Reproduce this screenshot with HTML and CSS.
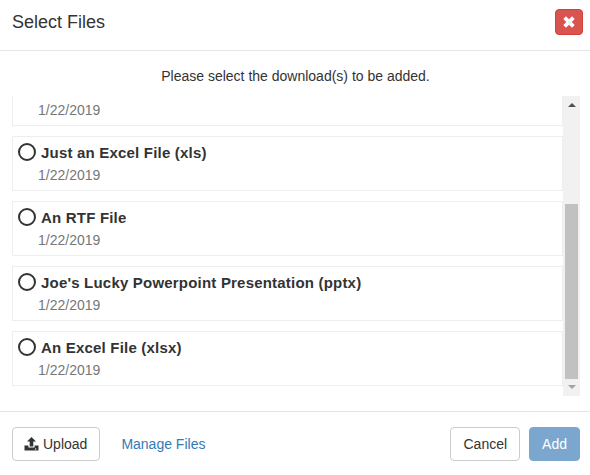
FILE: index.html
```html
<!DOCTYPE html>
<html>
<head>
  <title>Select Files</title>
  <link rel="stylesheet" href="styles.css">
</head>
<body>
  <div class="modal">
    <div class="modal-header">
      <h4>Select Files</h4>
      <button class="close-button">
        <svg width="12" height="12" viewBox="0 0 12 12"><path d="M3 0.3 L6 3.3 L9 0.3 L11.7 3 L8.7 6 L11.7 9 L9 11.7 L6 8.7 L3 11.7 L0.3 9 L3.3 6 L0.3 3 Z" fill="#fff"/></svg>
      </button>
    </div>
    <div class="modal-body">
      <p class="hint">Please select the download(s) to be added.</p>
      <div class="list-wrap">
        <div class="file-list">
          <div class="file-item file-cut">
            <div class="file-date">1/22/2019</div>
          </div>
          <div class="file-item">
            <div class="file-name"><span class="radio"></span>Just an Excel File (xls)</div>
            <div class="file-date">1/22/2019</div>
          </div>
          <div class="file-item">
            <div class="file-name"><span class="radio"></span>An RTF File</div>
            <div class="file-date">1/22/2019</div>
          </div>
          <div class="file-item">
            <div class="file-name"><span class="radio"></span>Joe's Lucky Powerpoint Presentation (pptx)</div>
            <div class="file-date">1/22/2019</div>
          </div>
          <div class="file-item">
            <div class="file-name"><span class="radio"></span>An Excel File (xlsx)</div>
            <div class="file-date">1/22/2019</div>
          </div>
        </div>
        <div class="scrollbar">
          <span class="arrow-up"></span>
          <div class="track"><div class="thumb"></div></div>
          <span class="arrow-down"></span>
        </div>
      </div>
    </div>
    <div class="modal-footer">
      <button class="btn">
        <svg class="upload-icon" width="15" height="14" viewBox="0 0 15 14"><path d="M7.5 0 L12 4.6 L9.3 4.6 L9.3 9.6 L5.7 9.6 L5.7 4.6 L3 4.6 Z" fill="#333"/><path d="M0.5 8.4 L4.4 8.4 L4.4 10.6 L10.6 10.6 L10.6 8.4 L14.5 8.4 L14.5 13.6 L0.5 13.6 Z" fill="#333"/><rect x="11" y="11.4" width="1.2" height="1.2" fill="#fff"/></svg>Upload
      </button>
      <a class="manage-link" href="#">Manage Files</a>
      <div class="spacer"></div>
      <button class="btn">Cancel</button>
      <button class="btn btn-add">Add</button>
    </div>
  </div>
</body>
</html>
```

FILE: styles.css
```css
* {
  box-sizing: border-box;
}
body {
  margin: 0;
  background: #fff;
  font-family: "Liberation Sans", Arial, sans-serif;
  font-size: 14px;
  color: #333;
}
.modal {
  width: 590px;
  height: 475px;
}
.modal-header {
  height: 51px;
  display: flex;
  align-items: flex-start;
  justify-content: space-between;
  padding: 9px 7px 0 12px;
  border-bottom: 1px solid #e5e5e5;
}
.modal-header h4 {
  margin: 3px 0 0 0;
  font-size: 18px;
  line-height: 20px;
  font-weight: normal;
}
.close-button {
  width: 28px;
  height: 26px;
  padding: 0;
  display: flex;
  align-items: center;
  justify-content: center;
  background: #d9534f;
  border: 1px solid #d43f3a;
  border-radius: 4px;
}
.modal-body {
  height: 360px;
  padding: 0 10px 0 12px;
}
.hint {
  margin: 0;
  height: 45px;
  padding: 17px 1px 0 0;
  line-height: 16px;
  text-align: center;
}
.list-wrap {
  display: flex;
  height: 300px;
}
.file-list {
  width: 551px;
  overflow: hidden;
}
.file-item {
  height: 55px;
  margin-bottom: 10px;
  padding: 4px 0 0 5px;
  border: 1px solid #eee;
}
.file-cut {
  height: 30px;
  padding-top: 2px;
  border-top: none;
}
.file-name {
  display: flex;
  align-items: center;
  height: 22px;
  font-size: 15px;
  font-weight: bold;
  letter-spacing: 0.2px;
}
.radio {
  width: 18px;
  height: 18px;
  margin-right: 5px;
  border: 2px solid #333;
  border-radius: 50%;
}
.file-date {
  padding-left: 20px;
  margin-top: 4px;
  line-height: 16px;
  color: #777;
}
.scrollbar {
  width: 17px;
  background: #f1f1f1;
  display: flex;
  flex-direction: column;
  align-items: center;
}
.arrow-up {
  margin-top: 7px;
  border: 4px solid transparent;
  border-top: none;
  border-bottom-color: #505050;
}
.track {
  flex: 1;
  width: 100%;
  padding: 97px 2px 0 2px;
}
.thumb {
  height: 175px;
  background: #c1c1c1;
}
.arrow-down {
  margin-bottom: 7px;
  border: 4px solid transparent;
  border-bottom: none;
  border-top-color: #a3a3a3;
}
.modal-footer {
  height: 64px;
  display: flex;
  align-items: center;
  padding: 1px 10px 0 12px;
  border-top: 1px solid #e5e5e5;
}
.btn {
  height: 34px;
  padding: 0 12px;
  display: flex;
  align-items: center;
  background: #fff;
  border: 1px solid #ccc;
  border-radius: 4px;
  font-family: inherit;
  font-size: 14px;
  color: #333;
}
.upload-icon {
  margin: 0 4px 0 -1px;
}
.manage-link {
  margin-left: 21px;
  color: #337ab7;
  text-decoration: none;
}
.spacer {
  flex: 1;
}
.btn-add {
  margin-left: 9px;
  background: #7ba7cf;
  border-color: #7ba7cf;
  color: #fff;
}
```
